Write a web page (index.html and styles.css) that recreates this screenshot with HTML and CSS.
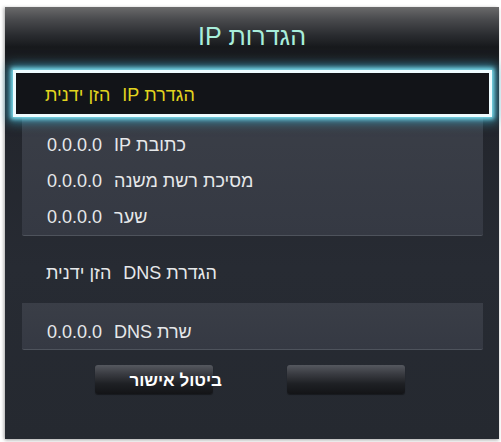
FILE: index.html
```html
<!DOCTYPE html>
<html lang="he">
<head>
<meta charset="utf-8">
<title>הגדרות IP</title>
<link rel="stylesheet" href="styles.css">
</head>
<body>
<div class="dialog">
  <div class="header"><h1 class="title" dir="rtl">הגדרות IP</h1></div>
  <div class="selected">
    <div class="row sel-row"><span class="label">הגדרת IP</span><span class="value">הזן ידנית</span></div>
  </div>
  <div class="panel panel-ip">
    <div class="row"><span class="label">כתובת IP</span><span class="value">0.0.0.0</span></div>
    <div class="row"><span class="label">מסיכת רשת משנה</span><span class="value">0.0.0.0</span></div>
    <div class="row"><span class="label">שער</span><span class="value">0.0.0.0</span></div>
  </div>
  <div class="row dns-mode"><span class="label">הגדרת DNS</span><span class="value">הזן ידנית</span></div>
  <div class="panel panel-dns">
    <div class="row"><span class="label">שרת DNS</span><span class="value">0.0.0.0</span></div>
  </div>
  <div class="buttons">
    <div class="btn"><span class="btn-text" dir="rtl">ביטול אישור</span></div>
    <div class="btn"></div>
  </div>
</div>
</body>
</html>
```

FILE: styles.css
```css
html, body {
  margin: 0;
  padding: 0;
  background: #ffffff;
}
body {
  width: 501px;
  height: 442px;
  overflow: hidden;
  font-family: "Liberation Sans", "DejaVu Sans", Arial, sans-serif;
}
.dialog {
  box-sizing: border-box;
  margin: 7px 2px 0 5px;
  width: 494px;
  height: 432px;
  background: linear-gradient(180deg, #1d2025 0px, #23262d 120px, #272b33 260px, #252930 432px);
  box-shadow: -2px 0 3px rgba(0,0,0,0.18), 0 2px 3px rgba(0,0,0,0.2);
  display: flex;
  flex-direction: column;
}
.header {
  height: 58px;
  background: linear-gradient(180deg, #6a6a6b 0px, #4a4b4e 12px, #2a2c30 28px, #17191c 40px, #1a1c20 50px, #1d2025 58px);
  display: flex;
  align-items: center;
  justify-content: center;
}
.title {
  margin: 0;
  margin-top: 0;
  margin-left: 0;
  font-weight: normal;
  font-size: 25px;
  color: #a9eedb;
  line-height: 1;
}
.selected {
  margin: 5px 7px 0 8px;
  height: 41px;
  border: 3px solid #eefcff;
  background: #121418;
  box-shadow: 0 0 4px 2px #7fe0f0, 0 0 10px 5px rgba(60, 170, 200, 0.7);
  position: relative;
  z-index: 1;
  display: flex;
  align-items: center;
}
.row {
  display: flex;
  direction: rtl;
  justify-content: flex-end;
  align-items: center;
  gap: 12px;
  height: 36px;
  font-size: 18px;
  color: #e6e8ea;
  white-space: nowrap;
}
.sel-row {
  width: 100%;
  padding-left: 29px;
  box-sizing: border-box;
  color: #e2d41e;
  margin-top: 4px;
}
.panel {
  margin: 0 16px 0 17px;
  background: linear-gradient(180deg, #3a3e47 0%, #353943 100%);
  border-bottom: 1px solid #4e535c;
  border-radius: 0 0 2px 2px;
}
.panel .row {
  padding-left: 25px;
}
.panel-ip {
  padding-top: 10px;
}
.dns-mode {
  margin: 19px 0 12px 0;
  padding-left: 41px;
}
.panel-dns {
  padding-top: 12px;
  height: 34px;
}
.panel-dns .row {
  height: 34px;
}
.buttons {
  display: flex;
  justify-content: center;
  gap: 74px;
  margin-top: 15px;
  padding-right: 4px;
}
.btn {
  width: 118px;
  height: 29px;
  border-radius: 3px;
  background: linear-gradient(180deg, #55585f 0%, #3a3c42 30%, #1e2024 65%, #131417 100%);
  box-shadow: 0 1px 1px rgba(0,0,0,0.4);
  display: flex;
  align-items: center;
  justify-content: flex-end;
}
.btn-text {
  margin-right: -9px;
  margin-top: 3px;
  font-weight: bold;
  font-size: 17px;
  color: #ffffff;
  white-space: nowrap;
}
```
